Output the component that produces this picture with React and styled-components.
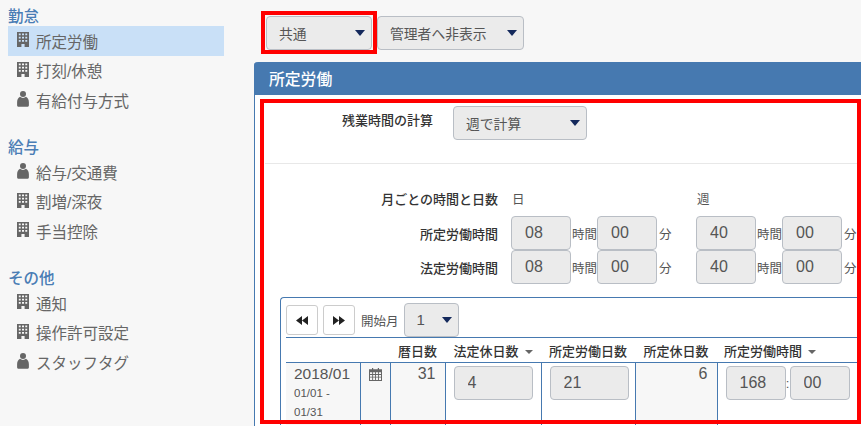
import styled, { createGlobalStyle } from "styled-components";

const GlobalStyle = createGlobalStyle`
    html, body {
        margin: 0;
        height: 100%;
        overflow: hidden;
        background-color: #F7F7F7;
        font-family: "Liberation Sans", "Noto Sans CJK JP", sans-serif;
    }
`;

const menu = [
    {
        title: "勤怠",
        items: [
            { name: "所定労働", icon: "building", active: true },
            { name: "打刻/休憩", icon: "building" },
            { name: "有給付与方式", icon: "user" },
        ],
    },
    {
        title: "給与",
        items: [
            { name: "給与/交通費", icon: "user" },
            { name: "割増/深夜", icon: "building" },
            { name: "手当控除", icon: "building" },
        ],
    },
    {
        title: "その他",
        items: [
            { name: "通知", icon: "building" },
            { name: "操作許可設定", icon: "building" },
            { name: "スタッフタグ", icon: "user" },
        ],
    },
];

function BuildingIcon() {
    return (
        <svg width="12" height="15" viewBox="0 0 12 15">
            <path
                fill="#666"
                fillRule="evenodd"
                d="M0 0h12v15H7.600v-3H4.400v3H0zM1.800 1.600v1.700h1.900V1.600zm3.200 0v1.700h2V1.600zm3.300 0v1.700h1.900V1.600zM1.800 4.800v1.700h1.900V4.800zm3.200 0v1.700h2V4.800zm3.300 0v1.700h1.900V4.800zM1.800 8v1.700h1.900V8zM5 8v1.700h2V8zm3.300 0v1.700h1.900V8z"
            />
        </svg>
    );
}

function UserIcon() {
    return (
        <svg width="12" height="16" viewBox="0 0 12 16">
            <circle cx="6" cy="3" r="3" fill="#666" />
            <path fill="#666" d="M3 5.800C1 6.800.1 9 .1 11.200v3c0 1 .8 1.600 1.800 1.600h8.200c1 0 1.800-.6 1.800-1.600v-3C11.900 9 11 6.800 9 5.800c-.8.700-1.900 1.100-3 1.100s-2.200-.4-3-1.100z" />
        </svg>
    );
}

function DoubleArrow({ back }) {
    return (
        <svg width="12" height="9" viewBox="0 0 12 9">
            <path fill="#222" d={back ? "M6 0v9L0 4.500zM12 0v9L6 4.500z" : "M0 0v9l6-4.500zM6 0v9l6-4.500z"} />
        </svg>
    );
}

function CalendarIcon() {
    return (
        <svg width="13" height="13" viewBox="0 0 13 13">
            <path
                fill="#666"
                fillRule="evenodd"
                d="M3 0h1.200v1.200h4.600V0H10v1.200h3V13H0V1.200h3zM1 4.200v1.800h2.200V4.200zm3.100 0v1.800h2V4.200zm2.900 0v1.800h2V4.200zm2.900 0v1.800H12V4.200zM1 6.900v1.800h2.200V6.900zm3.100 0v1.800h2V6.900zm2.900 0v1.800h2V6.900zm2.900 0v1.800H12V6.900zM1 9.600V12h2.200V9.600zm3.100 0V12h2V9.600zm2.900 0V12h2V9.600zm2.900 0V12H12V9.600z"
            />
        </svg>
    );
}

function TimeRow({ label, hours }) {
    return (
        <Row>
            <RowLabel>{label}</RowLabel>
            <Group>
                <Input value={hours[0]} readOnly />
                <Unit>時間</Unit>
                <Input value="00" readOnly />
                <MinuteUnit>分</MinuteUnit>
            </Group>
            <Group>
                <Input value={hours[1]} readOnly />
                <Unit>時間</Unit>
                <Input value="00" readOnly />
                <MinuteUnit>分</MinuteUnit>
            </Group>
        </Row>
    );
}

export default function App() {
    return (
        <Page>
            <GlobalStyle />
            <Sidebar>
                {menu.map((section) => (
                    <Section key={section.title}>
                        <SectionTitle>{section.title}</SectionTitle>
                        {section.items.map((item) => (
                            <MenuItem key={item.name} $active={item.active}>
                                <IconSlot>{item.icon === "user" ? <UserIcon /> : <BuildingIcon />}</IconSlot>
                                {item.name}
                            </MenuItem>
                        ))}
                    </Section>
                ))}
            </Sidebar>

            <Main>
                <Toolbar>
                    <Select $width="106px">
                        共通
                        <Caret />
                        <Highlight $inset="-6px -6px -5px -6px" />
                    </Select>
                    <Select $width="147px">
                        管理者へ非表示
                        <Caret />
                    </Select>
                </Toolbar>

                <Panel>
                    <PanelHeader>所定労働</PanelHeader>
                    <PanelBody>
                        <Highlight $inset="4px 34px 2px 5px" />
                        <CalcRow>
                            <CalcLabel>残業時間の計算</CalcLabel>
                            <Select $width="134px">
                                週で計算
                                <Caret />
                            </Select>
                        </CalcRow>
                        <Divider />
                        <HeadRow>
                            <RowLabel>月ごとの時間と日数</RowLabel>
                            <Period>日</Period>
                            <Period>週</Period>
                        </HeadRow>
                        <TimeRow label="所定労働時間" hours={["08", "40"]} />
                        <TimeRow label="法定労働時間" hours={["08", "40"]} />

                        <TableBox>
                            <TableTools>
                                <PagerButton><DoubleArrow back /></PagerButton>
                                <PagerButton><DoubleArrow /></PagerButton>
                                <Unit>開始月</Unit>
                                <Select $width="55px" $size="15px">
                                    1
                                    <Caret />
                                </Select>
                            </TableTools>
                            <Table>
                                <colgroup>
                                    <col style={{ width: 74 }} />
                                    <col style={{ width: 30 }} />
                                    <col style={{ width: 55 }} />
                                    <col style={{ width: 96 }} />
                                    <col style={{ width: 94 }} />
                                    <col style={{ width: 82 }} />
                                    <col style={{ width: 145 }} />
                                </colgroup>
                                <thead>
                                    <tr>
                                        <Th />
                                        <Th />
                                        <Th>暦日数</Th>
                                        <Th>法定休日数<SmallCaret /></Th>
                                        <Th>所定労働日数</Th>
                                        <Th>所定休日数</Th>
                                        <Th $left>所定労働時間<SmallCaret /></Th>
                                    </tr>
                                </thead>
                                <tbody>
                                    <tr>
                                        <DateCell>
                                            2018/01
                                            <DateRange>01/01 -<br />01/31</DateRange>
                                        </DateCell>
                                        <IconCell><CalendarIcon /></IconCell>
                                        <NumberCell>31</NumberCell>
                                        <InputCell><WideInput value="4" readOnly /></InputCell>
                                        <InputCell><WideInput value="21" readOnly /></InputCell>
                                        <NumberCell>6</NumberCell>
                                        <InputCell>
                                            <TimeInputs>
                                                <Input value="168" readOnly />
                                                <Colon>:</Colon>
                                                <Input value="00" readOnly />
                                            </TimeInputs>
                                        </InputCell>
                                    </tr>
                                </tbody>
                            </Table>
                        </TableBox>
                    </PanelBody>
                </Panel>
            </Main>
        </Page>
    );
}

const Page = styled.div`
    width: 861px;
    height: 426px;
    display: flex;
    overflow: hidden;
    box-sizing: border-box;
    background-color: #F7F7F7;
`;

const Sidebar = styled.div`
    width: 254px;
    flex-shrink: 0;
    padding: 7px 30px 0 8px;
    box-sizing: border-box;
`;

const Section = styled.div`
    margin-bottom: 23.500px;
`;

const SectionTitle = styled.div`
    color: #4A7DB5;
    font-size: 15.500px;
    font-weight: 500;
    line-height: 19px;
`;

const MenuItem = styled.div`
    height: 29.500px;
    display: flex;
    align-items: center;
    font-size: 15.500px;
    color: #666;
    background-color: ${(props) => (props.$active ? "#C9E0F7" : "transparent")};
`;

const IconSlot = styled.span`
    width: 28px;
    display: flex;
    justify-content: flex-end;
    padding: 0 7px 2px 0;
    box-sizing: border-box;
`;

const Main = styled.div`
    flex: 1;
    min-width: 0;
    padding-top: 16px;
`;

const Toolbar = styled.div`
    display: flex;
    gap: 5px;
    padding-left: 12px;
    margin-bottom: 12px;
`;

const Select = styled.div`
    position: relative;
    width: ${(props) => props.$width};
    height: 34px;
    flex-shrink: 0;
    display: flex;
    align-items: center;
    justify-content: space-between;
    padding: 0 6px 1px 12px;
    box-sizing: border-box;
    border: 1px solid #B9BEC5;
    border-radius: 4px;
    background-color: #EBEBEB;
    color: #555;
    font-size: ${(props) => props.$size || "13.800px"};
`;

const Caret = styled.span`
    width: 0;
    height: 0;
    border-left: 5px solid transparent;
    border-right: 5px solid transparent;
    border-top: 6px solid #14295C;
`;

const Highlight = styled.span`
    position: absolute;
    inset: ${(props) => props.$inset};
    border: 4px solid #FF0000;
    pointer-events: none;
`;

const Panel = styled.div`
    width: 640px;
    height: 364px;
    border-left: 1px solid #4679B0;
    border-radius: 4px 0 0 0;
    background-color: #FFFFFF;
`;

const PanelHeader = styled.div`
    height: 33px;
    margin-left: -1px;
    padding-left: 15px;
    display: flex;
    align-items: center;
    background-color: #4679B0;
    border-radius: 4px 0 0 0;
    color: #FFFFFF;
    font-size: 15.800px;
    font-weight: 500;
`;

const PanelBody = styled.div`
    position: relative;
    height: 331px;
    padding-top: 11px;
    box-sizing: border-box;
`;

const CalcRow = styled.div`
    display: flex;
    align-items: flex-start;
    height: 57px;
`;

const CalcLabel = styled.div`
    width: 178px;
    margin-right: 20px;
    text-align: right;
    font-size: 13px;
    font-weight: 500;
    line-height: 30px;
    color: #333;
`;

const Divider = styled.div`
    height: 1px;
    margin-left: 10px;
    background-color: #E8E8E8;
`;

const HeadRow = styled.div`
    display: flex;
    align-items: center;
    height: 35px;
    margin-top: 17px;
`;

const Row = styled.div`
    display: flex;
    align-items: center;
    height: 34px;
`;

const RowLabel = styled.div`
    width: 256px;
    padding-right: 13px;
    box-sizing: border-box;
    flex-shrink: 0;
    text-align: right;
    font-size: 13px;
    font-weight: 500;
    color: #333;
`;

const Period = styled.div`
    width: 185px;
    flex-shrink: 0;
    padding-left: 1px;
    box-sizing: border-box;
    font-size: 12.500px;
    color: #555;
`;

const Group = styled.div`
    width: 185px;
    flex-shrink: 0;
    display: flex;
    align-items: center;
`;

const Input = styled.input`
    width: 60px;
    height: 34px;
    flex-shrink: 0;
    padding: 0 0 0 13px;
    box-sizing: border-box;
    border: 1px solid #B9BEC5;
    border-radius: 4px;
    background-color: #EBEBEB;
    color: #555;
    font-family: inherit;
    font-size: 16px;
    outline: none;
`;

const WideInput = styled(Input)`
    width: 79px;
    display: block;
`;

const Unit = styled.span`
    flex-shrink: 0;
    padding-left: 1px;
    font-size: 12.500px;
    color: #555;
`;

const MinuteUnit = styled(Unit)`
    padding-left: 2px;
`;

const TableBox = styled.div`
    margin: 13px 0 0 25px;
    padding: 5px 0 0 5px;
    border-top: 1px solid #4679B0;
    border-left: 1px solid #4679B0;
    border-radius: 4px 0 0 0;
`;

const TableTools = styled.div`
    display: flex;
    align-items: center;
    gap: 5px;
    height: 34px;
`;

const PagerButton = styled.div`
    width: 32px;
    height: 30px;
    display: flex;
    align-items: center;
    justify-content: center;
    border: 1px solid #CCCCCC;
    border-radius: 3px;
    box-sizing: border-box;
    background-color: #FFFFFF;
`;

const Table = styled.table`
    width: 576px;
    table-layout: fixed;
    border-collapse: collapse;
    border-top: 1px solid #4679B0;
`;

const Th = styled.th`
    height: 24px;
    padding: ${(props) => (props.$left ? "0 0 0 7px" : "0 5px")};
    border-bottom: 1px solid #4679B0;
    text-align: ${(props) => (props.$left ? "left" : "center")};
    white-space: nowrap;
    font-size: 13px;
    font-weight: 500;
    color: #333;
`;

const SmallCaret = styled.span`
    display: inline-block;
    margin-left: 6px;
    vertical-align: middle;
    border-left: 4px solid transparent;
    border-right: 4px solid transparent;
    border-top: 4px solid #666;
`;

const Cell = styled.td`
    height: 62px;
    padding: 3px 0 3px 8px;
    vertical-align: top;
    border-left: 1px solid #4679B0;
    box-sizing: border-box;
`;

const DateCell = styled(Cell)`
    padding: 0 0 0 8px;
    border-left: none;
    background-color: #F7F7F7;
    color: #555;
    font-size: 15.500px;
    line-height: 21px;
`;

const DateRange = styled.div`
    font-size: 11.500px;
    line-height: 19px;
`;

const IconCell = styled(Cell)`
    padding: 4px 0 0;
    text-align: center;
    background-color: #F7F7F7;
`;

const NumberCell = styled(Cell)`
    padding: 2px 9px 0 0;
    text-align: right;
    background-color: #F7F7F7;
    color: #555;
    font-size: 16px;
`;

const InputCell = styled(Cell)`
    text-align: left;
`;

const TimeInputs = styled.div`
    display: flex;
    align-items: center;
`;

const Colon = styled.span`
    width: 4px;
    text-align: center;
    font-size: 13px;
    color: #555;
`;
